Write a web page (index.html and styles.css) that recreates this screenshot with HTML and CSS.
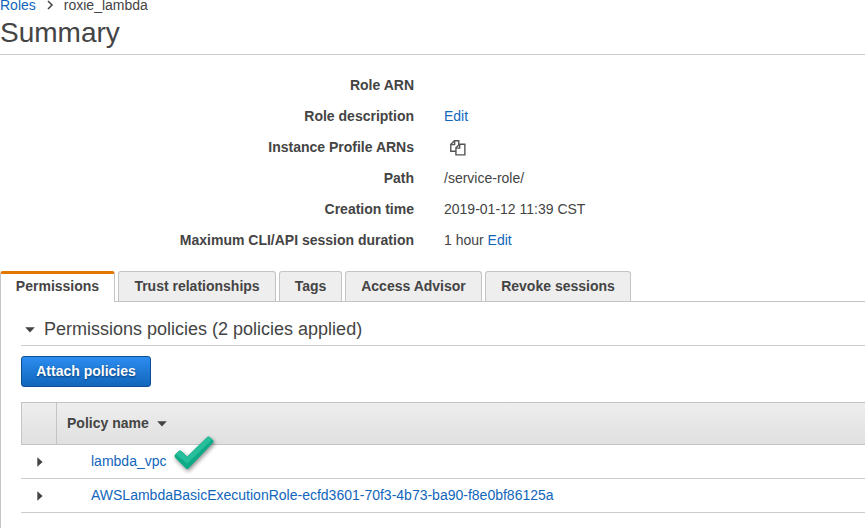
FILE: index.html
```html
<!DOCTYPE html>
<html lang="en">
<head>
<meta charset="utf-8">
<title>Summary</title>
<link rel="stylesheet" href="styles.css">
</head>
<body>
<nav class="crumbs">
  <a>Roles</a>
  <svg class="chevron" width="7" height="10" viewBox="0 0 7 10"><path d="M1 1l4 4-4 4" fill="none" stroke="#444" stroke-width="1.5"/></svg>
  <span>roxie_lambda</span>
</nav>
<h1>Summary</h1>
<dl class="details">
  <dt>Role ARN</dt><dd></dd>
  <dt>Role description</dt><dd><a>Edit</a></dd>
  <dt>Instance Profile ARNs</dt>
  <dd><svg class="copy" width="16" height="16" viewBox="0 0 17 17" fill="#fff" stroke="#555" stroke-width="1.5"><path d="M.8 4.7L4.7.8H9.3V12H.8z"/><path d="M.8 4.9H4.9V.8" fill="none"/><path d="M6.3 8.2L10 4.6h5.8v11.2H6.3z"/><path d="M6.3 8.6h4V4.6" fill="none"/></svg></dd>
  <dt>Path</dt><dd>/service-role/</dd>
  <dt>Creation time</dt><dd>2019-01-12 11:39 CST</dd>
  <dt>Maximum CLI/API session duration</dt><dd>1 hour <a>Edit</a></dd>
</dl>
<div class="tabs">
  <div class="tab active">Permissions</div>
  <div class="tab trust">Trust relationships</div>
  <div class="tab tags">Tags</div>
  <div class="tab access">Access Advisor</div>
  <div class="tab revoke">Revoke sessions</div>
</div>
<main class="panel">
  <h2><svg width="10" height="6" viewBox="0 0 10 6"><path d="M.2.3h9.6L5 5.5z" fill="#444"/></svg>Permissions policies (2 policies applied)</h2>
  <button class="attach">Attach policies</button>
  <div class="table">
    <div class="head">
      <div class="expand"></div>
      <div class="name">Policy name<svg width="10" height="6" viewBox="0 0 10 6"><path d="M.2.3h9.6L5 5.5z" fill="#444"/></svg></div>
    </div>
    <div class="row">
      <svg class="arrow" width="6" height="10" viewBox="0 0 6 10"><path d="M.3.2v9.6L5.6 5z" fill="#444"/></svg>
      <a>lambda_vpc</a>
      <svg class="check" width="50" height="44" viewBox="0 0 50 44">
        <path d="M4.2 22.4L8 18.8Q9.2 18 10.4 18.9L16.2 24.6 36 5.3Q37.6 4 39 5.2L42 8Q43 9.3 42 10.8L17.5 36.4Q16.2 37.5 14.9 36.4L4.2 25.8Q2.8 24 4.2 22.4z" fill="#0caa86"/>
        <path d="M4.6 22.2L8 18.9Q9.2 18.2 10.3 19.1L16.2 25 36.2 5.5Q37.6 4.3 38.9 5.4L41.2 7.6 16.2 31.6Z" fill="#27bf9b"/>
      </svg>
    </div>
    <div class="row">
      <svg class="arrow" width="6" height="10" viewBox="0 0 6 10"><path d="M.3.2v9.6L5.6 5z" fill="#444"/></svg>
      <a>AWSLambdaBasicExecutionRole-ecfd3601-70f3-4b73-ba90-f8e0bf86125a</a>
    </div>
  </div>
</main>
</body>
</html>
```
FILE: styles.css
```css
* { box-sizing: border-box; }
html { overflow: hidden; background: #fff; }
body {
  margin: 0;
  height: 528px;
  overflow: hidden;
  display: flex;
  flex-direction: column;
  font: 14px/16px "Liberation Sans", Arial, sans-serif;
  color: #444;
}
svg { flex: none; }
a { color: #1166bb; }
.crumbs { display: flex; align-items: flex-start; height: 13px; line-height: 10px; flex: none; }
.chevron { margin: 0 10px 0 11px; }
h1 {
  margin: 0;
  height: 42px;
  flex: none;
  border-bottom: 1px solid #ccc;
  font-size: 28px;
  font-weight: 400;
  line-height: 39px;
}
.details {
  display: grid;
  grid-template-columns: 414px 1fr;
  column-gap: 30px;
  grid-auto-rows: 31px;
  align-items: center;
  margin: 14px 0 0;
  height: 202px;
  flex: none;
}
dt { font-weight: 700; text-align: right; }
dd { margin: 0; }
.copy { display: block; margin: 2px 0 0 6px; }
.tabs {
  display: flex;
  gap: 3px;
  height: 31px;
  flex: none;
  border-bottom: 1px solid #c4c4c4;
}
.tab {
  height: 30px;
  border: 1px solid #c4c4c4;
  border-bottom: 0;
  border-radius: 3px 3px 0 0;
  background: #eee;
  font-weight: 700;
  line-height: 28px;
  text-align: center;
}
.active { width: 115px; height: 31px; border-top: 3px solid #e07700; background: #fff; line-height: 24px; }
.trust { width: 158px; }
.tags { width: 63px; }
.access { width: 137px; }
.revoke { width: 146px; }
.panel { flex: 1; border-left: 1px solid #c4c4c4; padding: 10px 0 0 20px; }
h2 {
  display: flex;
  align-items: center;
  gap: 9px;
  height: 34px;
  margin: 0;
  padding: 2px 0 0 4px;
  border-bottom: 1px solid #ccc;
  font-size: 18px;
  font-weight: 400;
  line-height: 31px;
}
.attach {
  display: block;
  width: 130px;
  height: 31px;
  margin: 10px 0 15px;
  padding: 0 0 1px;
  border: 1px solid #0c4f94;
  border-radius: 3px;
  background: linear-gradient(#2d8df0, #1166bb);
  color: #fff;
  font: 700 14px/28px "Liberation Sans", Arial, sans-serif;
  text-shadow: 0 1px 2px #063c72;
}
.table { border-top: 1px solid #c4c4c4; }
.head {
  display: flex;
  height: 42px;
  border-left: 1px solid #c4c4c4;
  border-bottom: 1px solid #c4c4c4;
  background: linear-gradient(#eee, #e0e0e0);
  font-weight: 700;
}
.expand { width: 35px; border-right: 1px solid #c4c4c4; }
.name { display: flex; align-items: center; gap: 8px; padding: 0 0 2px 10px; }
.name svg { margin-top: 3px; }
.row {
  position: relative;
  display: flex;
  align-items: center;
  height: 34px;
  padding-bottom: 2px;
  border-bottom: 1px solid #ccc;
}
.arrow { margin: 2px 48px 0 16px; }
.check { position: absolute; left: 150px; top: -13px; filter: drop-shadow(1px 2px 2px rgba(0, 0, 0, .45)); }
```
